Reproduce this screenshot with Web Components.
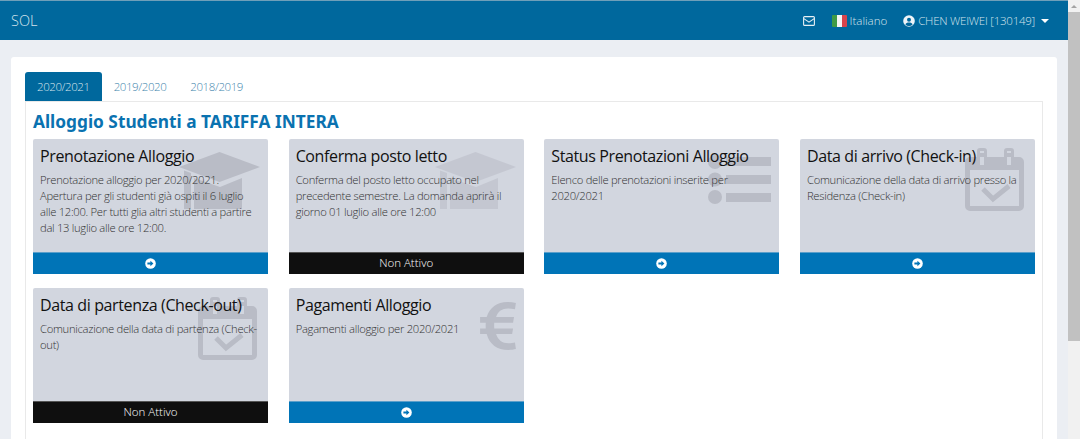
<!DOCTYPE html>
<html lang="it">
<head>
<meta charset="utf-8">
<title>SOL</title>
<style>
  html, body { margin: 0; height: 100%; overflow: hidden; }
  body { font-family: "Open Sans", sans-serif; background: #ebeef3; }
  #page { display: flex; height: 439px; }
  #content { flex: 1; min-width: 0; }
</style>
</head>
<body>
<div id="page">
  <div id="content">
    <top-bar></top-bar>
    <main-card>
      <tab-strip></tab-strip>
      <tab-panel title-text="Alloggio Studenti a TARIFFA INTERA">
        <info-tile heading="Prenotazione Alloggio" icon="cap">Prenotazione alloggio per 2020/2021.<br>Apertura per gli studenti già ospiti il 6 luglio alle 12:00. Per tutti glia altri studenti a partire dal 13 luglio alle ore 12:00.</info-tile>
        <info-tile heading="Conferma posto letto" icon="cap" disabled>Conferma del posto letto occupato nel precedente semestre. La domanda aprirà il giorno 01 luglio alle ore 12:00</info-tile>
        <info-tile heading="Status Prenotazioni Alloggio" icon="list">Elenco delle prenotazioni inserite per 2020/2021</info-tile>
        <info-tile heading="Data di arrivo (Check-in)" icon="calendar">Comunicazione della data di arrivo presso la Residenza (Check-in)</info-tile>
        <info-tile heading="Data di partenza (Check-out)" icon="calendar" disabled>Comunicazione della data di partenza (Check-out)</info-tile>
        <info-tile heading="Pagamenti Alloggio" icon="euro">Pagamenti alloggio per 2020/2021</info-tile>
      </tab-panel>
    </main-card>
  </div>
  <fake-scrollbar></fake-scrollbar>
</div>

<script>
// Top navigation bar
class TopBar extends HTMLElement {
  constructor() {
    super();
    this.attachShadow({mode: 'open'});
  }

  connectedCallback() {
    this.shadowRoot.innerHTML = `
    <style>
      :host {
        display: flex;
        align-items: center;
        height: 39px;
        border-top: 1px solid #6f9fb9;
        background: #00689d;
        color: #d5e3ec;
        font-size: 11.5px;
        letter-spacing: -0.25px;
        font-weight: 300;
        padding: 0 19px 0 11px;
      }
      .brand { font-size: 14.5px; letter-spacing: 0; flex: 1; }
      .item { display: flex; align-items: center; }
      svg { display: block; }
      .mail { margin-right: 17px; }
      .flag { margin-right: 3px; border-radius: 1px; }
      .lang { margin-right: 16px; letter-spacing: 0; }
      .user { margin-right: 3px; }
      .caret {
        width: 0; height: 0; margin-left: 6px;
        border: 4px solid transparent;
        border-top-color: #fff;
        border-bottom: 0;
      }
    </style>
    <div class="brand">SOL</div>
    <svg class="mail" width="12" height="10" viewBox="0 0 12 10" fill="none" stroke="#e6eff4" stroke-width="1.1">
      <rect x=".6" y=".6" width="10.8" height="8.8" rx="1"/>
      <path d="M.8 2.6 6 6.2l5.2-3.6"/>
    </svg>
    <svg class="flag" width="15" height="12" viewBox="0 0 15 12">
      <rect width="5" height="12" fill="#3f9a46"/>
      <rect x="5" width="5" height="12" fill="#f4f4f4"/>
      <rect x="10" width="5" height="12" fill="#d8444c"/>
    </svg>
    <div class="item lang">Italiano</div>
    <svg class="user" width="12" height="12" viewBox="0 0 12 12">
      <circle cx="6" cy="6" r="5.8" fill="#eef4f8"/>
      <circle cx="6" cy="4.7" r="2" fill="#00689d"/>
      <path d="M2.4 9.4C3 7.9 4.3 7.4 6 7.4s3 .5 3.6 2A4.8 4.8 0 0 1 6 10.9a4.8 4.8 0 0 1-3.6-1.5z" fill="#00689d"/>
    </svg>
    <div class="item">CHEN WEIWEI [130149]</div>
    <div class="caret"></div>
    `;
  }
}
customElements.define('top-bar', TopBar);

// White card under the navbar
class MainCard extends HTMLElement {
  constructor() {
    super();
    this.attachShadow({mode: 'open'});
  }

  connectedCallback() {
    this.shadowRoot.innerHTML = `
    <style>
      :host {
        display: block;
        margin: 17px 11px 0;
        padding: 15px 14px 0;
        background: #fff;
        height: 382px;
        box-sizing: border-box;
        border-radius: 3px 3px 0 0;
      }
    </style>
    <slot></slot>
    `;
  }
}
customElements.define('main-card', MainCard);

// Year tabs
class TabStrip extends HTMLElement {
  constructor() {
    super();
    this.attachShadow({mode: 'open'});
  }

  connectedCallback() {
    const years = ['2020/2021', '2019/2020', '2018/2019'];
    this.shadowRoot.innerHTML = `
    <style>
      :host {
        display: flex;
        height: 29px;
        font-size: 11.5px;
        letter-spacing: -0.42px;
        font-weight: 300;
      }
      .tab {
        display: flex;
        align-items: center;
        padding: 0 12px;
        color: #3f86ad;
      }
      .tab.active {
        background: #00689d;
        color: #d5e3ec;
        border-radius: 3px 3px 0 0;
      }
    </style>
    ${years.map((y, i) => `<div class="tab ${i === 0 ? 'active' : ''}">${y}</div>`).join('')}
    `;
  }
}
customElements.define('tab-strip', TabStrip);

// Panel with heading and the tiles grid
class TabPanel extends HTMLElement {
  constructor() {
    super();
    this.attachShadow({mode: 'open'});
  }

  connectedCallback() {
    this.shadowRoot.innerHTML = `
    <style>
      :host {
        display: block;
        height: 338px;
        box-sizing: border-box;
        border: 1px solid #e9e9e9;
        border-bottom: 0;
        padding: 0 7px;
      }
      h2 {
        margin: 0;
        height: 37px;
        line-height: 39px;
        font-family: "Noto Sans", sans-serif;
        font-size: 17.3px;
        font-weight: 700;
        color: #0a72b0;
      }
      .grid {
        display: grid;
        grid-template-columns: repeat(4, 235px);
        justify-content: space-between;
        grid-auto-rows: 135px;
        row-gap: 14px;
      }
    </style>
    <h2>${this.getAttribute('title-text')}</h2>
    <div class="grid"><slot></slot></div>
    `;
  }
}
customElements.define('tab-panel', TabPanel);

const TILE_ICONS = {
  cap: `<svg width="82" height="58" viewBox="0 0 82 58" style="right:7px;top:13px">
    <path d="M40.500 0 81 15 40.500 30 0 15z"/>
    <path d="M5 18.500 12 21V57H5zM15 26 41 35 63 26V57H15z"/>
  </svg>`,
  list: `<svg width="63" height="50" viewBox="0 0 63 50" style="right:8px;top:16px">
    <circle cx="7" cy="7" r="7"/><rect x="18" y="2" width="45" height="9"/>
    <circle cx="7" cy="24.500" r="7"/><rect x="18" y="20" width="45" height="9"/>
    <circle cx="7" cy="42" r="7"/><rect x="18" y="38" width="45" height="9"/>
  </svg>`,
  calendar: `<svg width="59" height="63" viewBox="0 0 59 63" style="right:11px;top:9px">
    <path fill-rule="evenodd" d="M5 9a5 5 0 0 0-5 5v44a5 5 0 0 0 5 5h49a5 5 0 0 0 5-5V14a5 5 0 0 0-5-5zM5 22v36h49V22zM15 5v12h4V5zM42 5v12h4V5z"/>
    <path fill-rule="evenodd" d="M12 3a3 3 0 0 1 3-3h4a3 3 0 0 1 3 3v14a3 3 0 0 1-3 3h-4a3 3 0 0 1-3-3zM15 3v14h4V3zM39 3a3 3 0 0 1 3-3h4a3 3 0 0 1 3 3v14a3 3 0 0 1-3 3h-4a3 3 0 0 1-3-3zM42 3v14h4V3z"/>
    <path d="M18 41l10 10 16-13" fill="none" stroke-width="5" style="stroke:currentColor"/>
  </svg>`,
  euro: `<svg width="36" height="49" viewBox="0 0 38 52" style="right:8px;top:14px">
    <path d="M38 1C35 .3 32 0 29 0 18 0 10 6 7 16H0v6h6l-.1 3 .1 3H0v6h7c3 11 11 17 23 17 3 0 6-.5 8-1l-1-7c-2 .5-4 .8-7 .8-6.500 0-11-3.300-13-9.800h17l1-6H15l-.1-3 .1-3h20l1-6H17c2-6 6.500-9 12.500-9 2.500 0 5 .3 7.500.8z"/>
  </svg>`
};

// Grey tile with big watermark icon and a footer bar
class InfoTile extends HTMLElement {
  constructor() {
    super();
    this.attachShadow({mode: 'open'});
  }

  connectedCallback() {
    const disabled = this.hasAttribute('disabled');
    const footer = disabled
      ? 'Non Attivo'
      : `<svg width="11" height="11" viewBox="0 0 11 11">
          <circle cx="5.500" cy="5.500" r="5.300" fill="#fff"/>
          <path d="M2.400 4.600h3V2.800l3 2.700-3 2.700V6.400h-3z" fill="#0074b7"/>
        </svg>`;
    this.shadowRoot.innerHTML = `
    <style>
      :host {
        display: flex;
        flex-direction: column;
        position: relative;
        overflow: hidden;
        background: #d2d6df;
        border-radius: 2px 2px 0 0;
      }
      .icon { position: absolute; inset: 0; color: #b9bcc6; }
      .icon svg { position: absolute; fill: #b9bcc6; }
      :host([disabled][icon="cap"]) .icon svg { fill: #c4c7d1; }
      .body {
        position: relative;
        flex: 1;
        padding: 6px 7px 0;
      }
      h3 {
        margin: 0 0 5px;
        font-size: 16px;
        letter-spacing: -0.38px;
        line-height: 22px;
        font-weight: 400;
        color: #111;
      }
      p {
        margin: 0;
        font-size: 11.25px;
        letter-spacing: -0.3px;
        line-height: 16px;
        font-weight: 300;
        color: #333;
      }
      .foot {
        position: relative;
        display: flex;
        align-items: center;
        justify-content: center;
        height: 21px;
        background: #0074b7;
        border-top: 1px solid #5b9fca;
        color: #fff;
        font-size: 11.5px;
        font-weight: 300;
      }
      :host([disabled]) .foot {
        background: #0f0f0f;
        border-top-color: #555;
        height: 19px;
        padding-bottom: 2px;
      }
    </style>
    <div class="icon">${TILE_ICONS[this.getAttribute('icon')]}</div>
    <div class="body">
      <h3>${this.getAttribute('heading')}</h3>
      <p><slot></slot></p>
    </div>
    <div class="foot">${footer}</div>
    `;
  }
}
customElements.define('info-tile', InfoTile);

// Browser scrollbar as seen in the screenshot
class FakeScrollbar extends HTMLElement {
  constructor() {
    super();
    this.attachShadow({mode: 'open'});
  }

  connectedCallback() {
    this.shadowRoot.innerHTML = `
    <style>
      :host {
        display: flex;
        flex-direction: column;
        width: 12px;
        flex: none;
        background: #f1f1f1;
      }
      .btn { height: 12px; display: flex; align-items: center; justify-content: center; }
      .btn i { border: 3px solid transparent; border-bottom-color: #a3a3a3; border-top: 0; }
      .thumb { height: 329px; background: #c1c1c1; }
    </style>
    <div class="btn"><i></i></div>
    <div class="thumb"></div>
    `;
  }
}
customElements.define('fake-scrollbar', FakeScrollbar);
</script>
</body>
</html>
